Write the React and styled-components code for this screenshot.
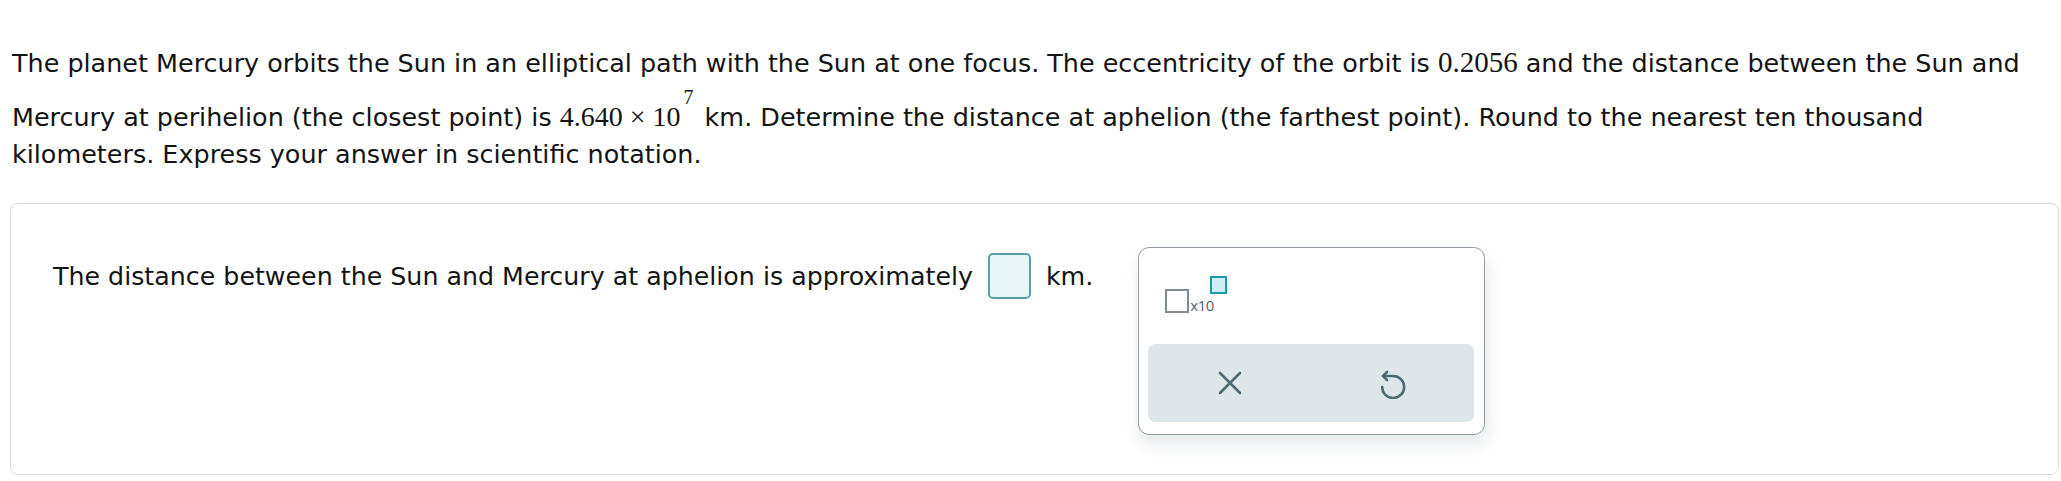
import React from "react";
import styled, { createGlobalStyle } from "styled-components";

const Global = createGlobalStyle`
  html, body { margin: 0; padding: 0; background: #ffffff; }
  body { font-family: "DejaVu Sans", Verdana, sans-serif; color: #141414; }
`;

const Page = styled.div`
  padding: 44px 2px 0 10px;
  width: 2061px;
  box-sizing: border-box;
`;

const Question = styled.p`
  margin: 0 0 30px 2px;
  font-size: 25.45px;
  line-height: 37px;
`;

const Math = styled.span`
  font-family: "Liberation Serif", "Times New Roman", serif;
  font-size: ${(p) => p.$size || 29}px;
`;

const Power = styled.span`
  display: inline-block;
  font-family: "Liberation Serif", "Times New Roman", serif;
  font-size: 20px;
  line-height: 1;
  vertical-align: 22px;
  padding-top: 5px;
  margin-left: 3px;
  margin-right: 3px;
`;

const Card = styled.div`
  border: 1px solid #dadada;
  border-radius: 8px;
  height: 272px;
  box-sizing: border-box;
  padding: 43px 0 0 42px;
`;

const Row = styled.div`
  display: flex;
  align-items: flex-start;
  font-size: 25.3px;
`;

const Sentence = styled.div`
  display: flex;
  align-items: center;
  height: 46px;
  margin-top: 6px;
  gap: 15px;
`;

const AnswerBox = styled.span`
  display: inline-block;
  width: 43px;
  height: 46px;
  box-sizing: border-box;
  background: #e6f6f9;
  border: 2px solid #5d9ea8;
  border-radius: 5px;
`;

const Popup = styled.div`
  margin-left: 45px;
  width: 347px;
  height: 188px;
  box-sizing: border-box;
  border: 1.5px solid #8f9ea5;
  border-radius: 11px;
  background: #ffffff;
  box-shadow: 2px 10px 16px rgba(60, 80, 90, 0.13);
  padding: 26px 10px 12px 9px;
  display: flex;
  flex-direction: column;
  justify-content: space-between;
`;

const Template = styled.div`
  position: relative;
  margin-left: 17px;
  width: 80px;
  height: 40px;
  display: flex;
  align-items: flex-end;
`;

const BaseBox = styled.span`
  display: inline-block;
  width: 24px;
  height: 24px;
  box-sizing: border-box;
  border: 2.5px solid #7d8d93;
  margin-bottom: 1px;
`;

const Ten = styled.span`
  font-family: "Open Sans", "DejaVu Sans", sans-serif;
  font-size: 15px;
  color: #4f5f66;
  line-height: 1;
  margin-left: 1px;
  margin-bottom: 1px;
  letter-spacing: -0.5px;
`;

const ExpBox = styled.span`
  position: absolute;
  left: 45px;
  top: 2px;
  width: 17px;
  height: 18px;
  box-sizing: border-box;
  border: 2.5px solid #1d98a6;
  background: #cdeff4;
`;

const ButtonBar = styled.div`
  height: 78px;
  background: #dfe6e9;
  border-radius: 7px;
  display: grid;
  grid-template-columns: 1fr 1fr;
  align-items: center;
`;

const IconButton = styled.button`
  border: none;
  background: transparent;
  padding: 0;
  height: 100%;
  display: flex;
  align-items: center;
  justify-content: center;
  color: #4b6b74;
  cursor: pointer;
`;

const Km = styled.span``;

export default function App() {
  return (
    <>
      <Global />
      <Page>
        <Question>
          The planet Mercury orbits the Sun in an elliptical path with the Sun at one focus. The eccentricity of the orbit is{" "}
          <Math $size={29}>0.2056</Math> and the distance between the Sun and
          <br />
          Mercury at perihelion (the closest point) is <Math $size={28}>4.640 × 10</Math>
          <Power>7</Power> km. Determine the distance at aphelion (the farthest point). Round to the nearest ten thousand
          <br />
          kilometers. Express your answer in scientific notation.
        </Question>
        <Card>
          <Row>
            <Sentence>
              <span>The distance between the Sun and Mercury at aphelion is approximately</span>
              <AnswerBox />
              <Km>km.</Km>
            </Sentence>
            <Popup>
              <Template>
                <BaseBox />
                <Ten>x10</Ten>
                <ExpBox />
              </Template>
              <ButtonBar>
                <IconButton aria-label="clear">
                  <svg width="24" height="24" viewBox="0 0 24 24" fill="none" stroke="currentColor" strokeWidth="2.6" strokeLinecap="round">
                    <path d="M2 2 L22 22 M22 2 L2 22" />
                  </svg>
                </IconButton>
                <IconButton aria-label="undo">
                  <svg width="28" height="32" viewBox="0 0 28 32" fill="none" stroke="currentColor" strokeWidth="2.6" strokeLinecap="round" strokeLinejoin="round">
                    <path d="M8 5 L4 9 L8 13" />
                    <path d="M4 9 H14 A11 11 0 1 1 3.2 20" />
                  </svg>
                </IconButton>
              </ButtonBar>
            </Popup>
          </Row>
        </Card>
      </Page>
    </>
  );
}
